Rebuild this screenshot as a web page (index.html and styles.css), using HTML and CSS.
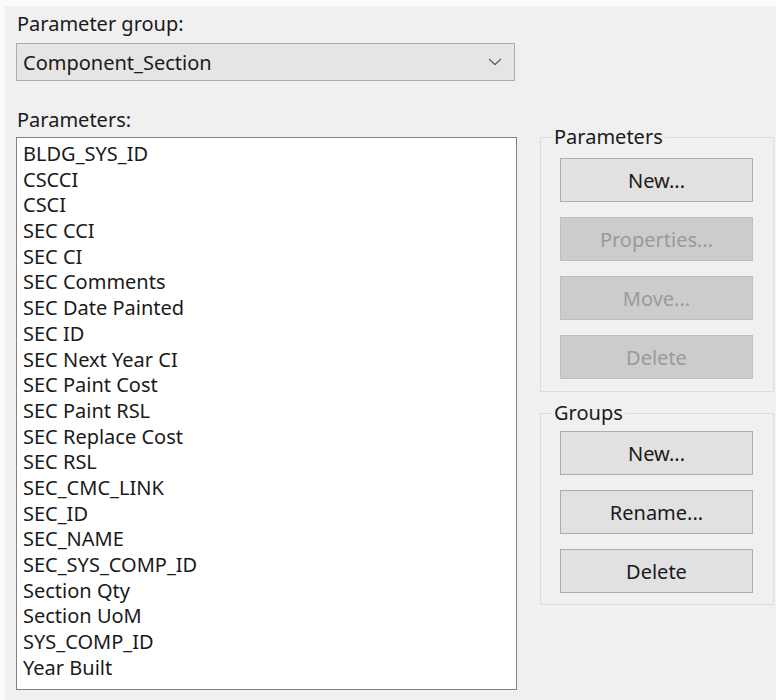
FILE: index.html
```html
<!DOCTYPE html>
<html lang="en">
<head>
<meta charset="utf-8">
<title>Parameters</title>
<link rel="stylesheet" href="styles.css">
</head>
<body>
<div class="panel">
  <div class="field-label">Parameter group:</div>
  <div class="combo">
    <span class="combo-value">Component_Section</span>
    <svg class="chevron" width="14" height="8" viewBox="0 0 14 8"><path d="M1 1 L7 6.5 L13 1" fill="none" stroke="#606060" stroke-width="1.3"/></svg>
  </div>

  <div class="main">
    <div class="list-col">
      <div class="field-label params-label">Parameters:</div>
      <ul class="listbox">
        <li>BLDG_SYS_ID</li>
        <li>CSCCI</li>
        <li>CSCI</li>
        <li>SEC CCI</li>
        <li>SEC CI</li>
        <li>SEC Comments</li>
        <li>SEC Date Painted</li>
        <li>SEC ID</li>
        <li>SEC Next Year CI</li>
        <li>SEC Paint Cost</li>
        <li>SEC Paint RSL</li>
        <li>SEC Replace Cost</li>
        <li>SEC RSL</li>
        <li>SEC_CMC_LINK</li>
        <li>SEC_ID</li>
        <li>SEC_NAME</li>
        <li>SEC_SYS_COMP_ID</li>
        <li>Section Qty</li>
        <li>Section UoM</li>
        <li>SYS_COMP_ID</li>
        <li>Year Built</li>
      </ul>
    </div>

    <div class="side-col">
      <fieldset class="group group-params">
        <legend>Parameters</legend>
        <button class="btn" type="button">New...</button>
        <button class="btn" type="button" disabled>Properties...</button>
        <button class="btn" type="button" disabled>Move...</button>
        <button class="btn" type="button" disabled>Delete</button>
      </fieldset>
      <fieldset class="group group-groups">
        <legend>Groups</legend>
        <button class="btn" type="button">New...</button>
        <button class="btn" type="button">Rename...</button>
        <button class="btn" type="button">Delete</button>
      </fieldset>
    </div>
  </div>
</div>
</body>
</html>
```

FILE: styles.css
```css
html, body {
  margin: 0;
  padding: 0;
  background: #fbfbfb;
}

body {
  font-family: "Noto Sans", "DejaVu Sans", sans-serif;
  font-size: 20px;
  color: #1a1a1a;
  overflow: hidden;
}

.panel {
  margin: 6px 0 0 5px;
  height: 694px;
  background: #f0f0f0;
  padding: 7px 0 0 11px;
  box-sizing: border-box;
}

.field-label {
  line-height: 22px;
  height: 22px;
  padding-left: 1px;
}

/* drop-down showing the current parameter group */
.combo {
  margin-top: 8px;
  width: 499px;
  height: 38px;
  box-sizing: border-box;
  border: 1px solid #adadad;
  background: #e5e5e5;
  display: flex;
  align-items: center;
  justify-content: space-between;
  padding: 0 12px 0 6px;
}

.chevron {
  display: block;
}

.main {
  display: flex;
  gap: 23px;
  margin-top: 28px;
}

.list-col {
  width: 501px;
  display: flex;
  flex-direction: column;
}

.params-label {
  margin-bottom: 6px;
}

.listbox {
  list-style: none;
  margin: 0;
  padding: 3px 6px;
  height: 553px;
  box-sizing: border-box;
  border: 1px solid #828282;
  background: #ffffff;
}

.listbox li {
  line-height: 25.7px;
  height: 25.7px;
  white-space: nowrap;
}

.side-col {
  width: 234px;
  display: flex;
  flex-direction: column;
  margin-top: 17px;
}

/* Windows-style group boxes */
.group {
  margin: 0;
  border: 1px solid #dcdcdc;
  display: flex;
  flex-direction: column;
  gap: 15px;
  padding: 10px 20px 12px 19px;
  min-width: 0;
}

.group legend {
  font-size: 20px;
  line-height: 22px;
  padding: 0 2px;
  margin-left: -8px;
}

.group-groups {
  margin-top: 10px;
  padding-top: 7px;
  padding-bottom: 11px;
}

.btn {
  width: 193px;
  height: 44px;
  box-sizing: border-box;
  border: 1px solid #adadad;
  background: #e1e1e1;
  font: inherit;
  font-size: 20px;
  color: #1a1a1a;
  padding: 0;
  border-radius: 0;
}

.btn:disabled {
  background: #cccccc;
  border-color: #bfbfbf;
  color: #9a9a9a;
}
```
